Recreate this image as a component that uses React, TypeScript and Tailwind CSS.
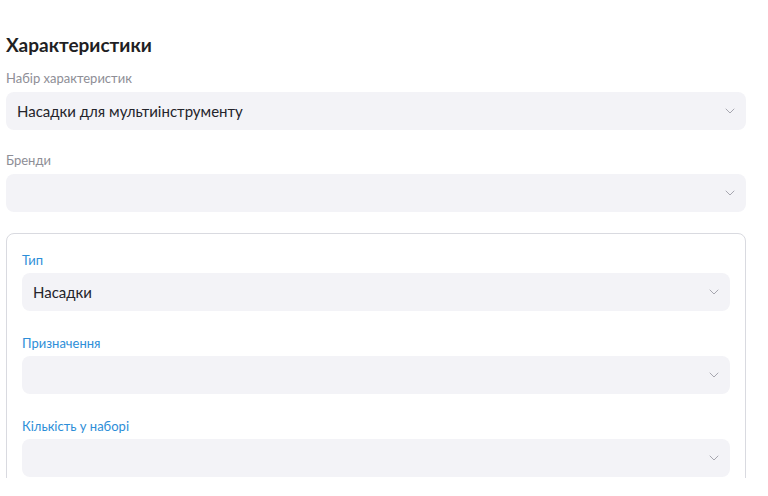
import { ChevronDown } from "lucide-react";

type Field = { label: string; value?: string };

const topFields: Field[] = [
  { label: "Набір характеристик", value: "Насадки для мультиінструменту" },
  { label: "Бренди" },
];

const groupFields: Field[] = [
  { label: "Тип", value: "Насадки" },
  { label: "Призначення" },
  { label: "Кількість у наборі" },
];

function Select({ value }: { value?: string }) {
  return (
    <div className="flex h-[38px] items-center justify-between rounded-lg bg-[#f3f3f7] pl-[11px] pr-[8px]">
      <span className="text-[15px] text-[#24242b]">{value}</span>
      <ChevronDown className="h-[16px] w-[16px] text-[#a0a0aa]" strokeWidth={1.4} />
    </div>
  );
}

export default function App() {
  return (
    <div className="h-[496px] overflow-hidden bg-white font-['Lato',sans-serif]">
      <div className="h-[478px] overflow-hidden px-[6px] pt-[33px] pr-[22px]">
        <h2 className="text-[19px] font-bold leading-6 text-[#1f1f24]">Характеристики</h2>

        <div className="mt-[12px]">
          {topFields.map((field) => (
            <div key={field.label} className="mb-[21px]">
              <p className="mb-[5px] text-[13px] leading-[18px] text-[#8e8e96]">{field.label}</p>
              <Select value={field.value} />
            </div>
          ))}
        </div>

        <div className="mt-[2px] rounded-lg border border-[#d9dae0] px-[15px] pt-[17px]">
          {groupFields.map((field) => (
            <div key={field.label} className="mb-[23px]">
              <p className="mb-[4px] text-[13px] leading-[18px] text-[#2d8ed8]">{field.label}</p>
              <Select value={field.value} />
            </div>
          ))}
        </div>
      </div>
    </div>
  );
}
